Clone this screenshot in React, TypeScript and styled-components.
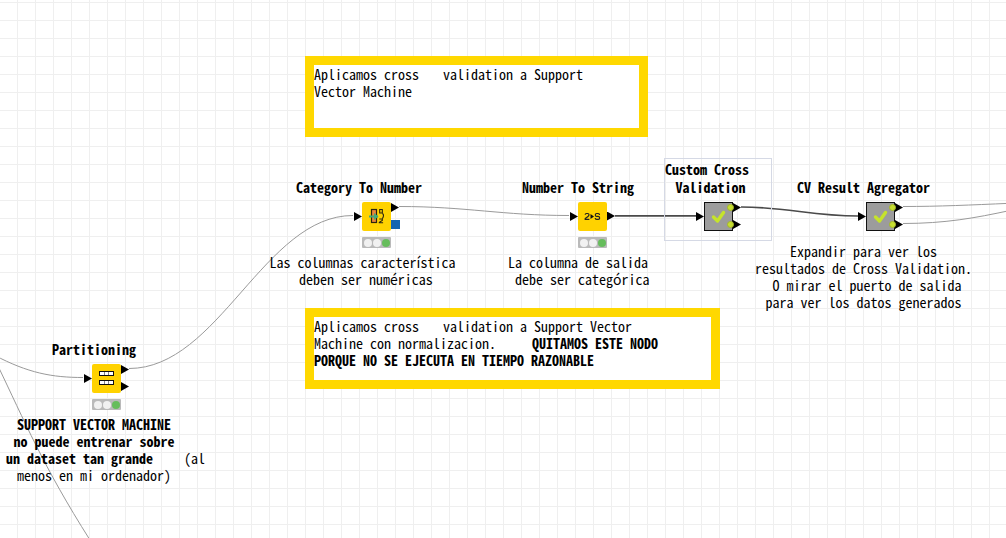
import React from "react";
import styled, { createGlobalStyle, css } from "styled-components";

const GlobalStyle = createGlobalStyle`
  *, *::before, *::after { box-sizing: border-box; }
  body {
    margin: 0;
    background: #fff;
    color: #000;
    font-family: "Noto Sans Mono CJK SC", "Liberation Mono", monospace;
    font-size: 14px;
    line-height: 17px;
  }
`;

const Canvas = styled.main`
  position: relative;
  min-height: 100vh;
  overflow: hidden;
  background-color: #fff;
  background-image: linear-gradient(to right, #efefef 1px, transparent 1px),
    linear-gradient(to bottom, #efefef 1px, transparent 1px);
  background-size: 18px 18px;
  background-position: 17px 2px;
`;

const Connections = styled.svg`
  position: absolute;
  inset: 0;
  width: 100%;
  height: 100%;
  overflow: visible;
  fill: none;
`;

/* Anything that the user drops on the free workflow canvas. */
const CanvasItem = styled.div<{ $x: number; $y: number; $width: number }>`
  position: absolute;
  left: ${(p) => p.$x}px;
  top: ${(p) => p.$y}px;
  width: ${(p) => p.$width}px;
`;

const Annotation = styled(CanvasItem)`
  min-height: 81px;
  border: 9px solid #ffd800;
  background: #fff;
  padding-top: 1px;
`;

const Paragraph = styled.p`
  margin: 0;
  white-space: nowrap;
`;

const Gap = styled.span<{ $width: number }>`
  display: inline-block;
  width: ${(p) => p.$width}px;
`;

const Selection = styled(CanvasItem)`
  height: 83px;
  border: 1px solid #d5d9e5;
`;

const Title = styled.h2`
  margin: 0 0 6px;
  font-size: 14px;
  font-weight: 700;
  line-height: 18px;
  text-align: center;
  white-space: pre;
`;

const Description = styled.p<{ $far?: boolean }>`
  margin: ${(p) => (p.$far ? 12 : 6)}px 0 0;
  text-align: center;
  white-space: pre;
`;

const Line = styled.span`
  display: block;
`;

const NodeFigure = styled.div<{ $lead: number }>`
  padding-left: ${(p) => p.$lead}px;
`;

const NodeRow = styled.div`
  display: flex;
  align-items: center;
  height: 29px;
`;

const NodeBody = styled.div<{ $component?: boolean }>`
  width: 29px;
  height: 29px;
  background: #ffd200;
  border-radius: 2px;
  ${(p) =>
    p.$component &&
    css`
      background: #9c9c9c;
      border: 1px solid #111;
      border-radius: 0;
    `}
  svg {
    display: block;
    width: 100%;
    height: 100%;
  }
`;

const Outputs = styled.div`
  display: flex;
  flex-direction: column;
  justify-content: center;
  gap: 8px;
  height: 29px;
  padding: 1px 0 2px;
`;

const Arrow = styled.div`
  width: 8px;
  height: 9px;
  background: #000;
  clip-path: polygon(0 0, 100% 50%, 0 100%);
`;

const OutputPort = styled.div<{ $dot?: boolean }>`
  position: relative;
  ${(p) =>
    p.$dot &&
    css`
      &::before {
        content: "";
        position: absolute;
        z-index: 1;
        left: -6px;
        top: 1px;
        width: 7px;
        height: 7px;
        border: 1px solid #a3b52a;
        border-radius: 50%;
        background: #c6de30;
      }
    `}
`;

const ModelPort = styled.div`
  width: 9px;
  height: 9px;
  background: #1465b0;
`;

const Status = styled.div`
  display: flex;
  align-items: center;
  justify-content: center;
  gap: 1px;
  width: 29px;
  height: 11px;
  margin: 6px 0 0 8px;
  border-radius: 1px;
  background: #bababa;
`;

const Lamp = styled.span<{ $on?: boolean }>`
  width: 8px;
  height: 8px;
  border-radius: 50%;
  background: ${(p) => (p.$on ? "#66bd5c" : "#f1f1f1")};
`;

const PartitionIcon = () => (
  <svg viewBox="0 0 29 29" aria-hidden="true">
    <path d="M7 7h15v5H7zM7 16h15v5H7z" fill="#111" />
    <path
      d="M8 8h4v3H8zM12.500 8h4v3h-4zM17 8h4v3h-4zM8 17h4v3H8zM12.500 17h4v3h-4zM17 17h4v3h-4z"
      fill="#fff"
    />
  </svg>
);

const CategoryIcon = () => (
  <svg viewBox="0 0 29 29" fill="none" aria-hidden="true">
    <rect x="9.5" y="7.5" width="5" height="13" fill="#e8873a" stroke="#2b2410" strokeWidth="1.2" />
    <path d="M7 14.500h9" stroke="#45a878" strokeWidth="2" />
    <path d="M12 11l4.500 3.500L12 18z" fill="#45a878" />
    <path
      d="M17.700 7.500h2.600v3.500h-2.600zM20.500 11.500q2 1.500 0 5M17.300 17h3v1.500l-3 1.700v.5h3.800"
      stroke="#2b2410"
      strokeWidth="1.100"
    />
  </svg>
);

const ToStringIcon = () => (
  <svg viewBox="0 0 29 29" fill="none" aria-hidden="true">
    <path
      d="M7.200 12.800q0-1.300 1.300-1.300h1.200q1.300 0 1.300 1.300 0 .9-1 1.600l-2.800 2.100v.8h4.200"
      stroke="#222"
      strokeWidth="1.200"
    />
    <path d="M12.500 12l3.500 2.500-3.500 2.500z" fill="#111" />
    <path
      d="M21.500 12.900q0-1.400-1.400-1.400h-1.400q-1.400 0-1.400 1.400t1.400 1.500h1.400q1.500 0 1.500 1.500t-1.500 1.400h-1.500q-1.400 0-1.400-1.400"
      stroke="#222"
      strokeWidth="1.200"
    />
  </svg>
);

const CheckIcon = () => (
  <svg viewBox="0 0 27 27" fill="none" aria-hidden="true">
    <path
      d="M8.500 14l4 4L18.500 9.500"
      stroke="#c6e32b"
      strokeWidth="3.400"
      strokeLinecap="round"
      strokeLinejoin="round"
    />
  </svg>
);

type Port = "data" | "dotted" | "model";

interface NodeProps {
  x: number;
  y: number;
  width: number;
  lead: number;
  title: string[];
  icon: React.ReactNode;
  outputs: Port[];
  component?: boolean;
  description?: React.ReactNode[];
}

function WorkflowNode(props: NodeProps) {
  const { x, y, width, lead, title, icon, outputs, component, description } = props;
  return (
    <CanvasItem as="section" $x={x} $y={y} $width={width}>
      <Title>
        {title.map((text) => (
          <Line key={text}>{text}</Line>
        ))}
      </Title>
      <NodeFigure $lead={lead}>
        <NodeRow>
          <Arrow />
          <NodeBody $component={component}>{icon}</NodeBody>
          <Outputs>
            {outputs.map((port, i) =>
              port === "model" ? (
                <ModelPort key={i} />
              ) : (
                <OutputPort key={i} $dot={port === "dotted"}>
                  <Arrow />
                </OutputPort>
              )
            )}
          </Outputs>
        </NodeRow>
        {!component && (
          <Status>
            <Lamp />
            <Lamp />
            <Lamp $on />
          </Status>
        )}
      </NodeFigure>
      {description && (
        <Description $far={component}>
          {description.map((text, i) => (
            <Line key={i}>{text}</Line>
          ))}
        </Description>
      )}
    </CanvasItem>
  );
}

const nodes: NodeProps[] = [
  {
    x: 6,
    y: 340,
    width: 176,
    lead: 78,
    title: ["Partitioning"],
    icon: <PartitionIcon />,
    outputs: ["data", "data"],
    description: [
      <b>SUPPORT VECTOR MACHINE</b>,
      <b>no puede entrenar sobre</b>,
      <>
        <b>un dataset tan grande</b>
        <Gap $width={31} />
        (al
      </>,
      "menos en mi ordenador)",
    ],
  },
  {
    x: 268,
    y: 178,
    width: 189,
    lead: 86,
    title: ["Category To Number "],
    icon: <CategoryIcon />,
    outputs: ["data", "model"],
    description: ["Las columnas característica", " deben ser numéricas"],
  },
  {
    x: 508,
    y: 178,
    width: 140,
    lead: 62,
    title: ["Number To String"],
    icon: <ToStringIcon />,
    outputs: ["data"],
    description: ["La columna de salida", " debe ser categórica"],
  },
  {
    x: 665,
    y: 160,
    width: 84,
    lead: 31,
    title: ["Custom Cross", " Validation"],
    icon: <CheckIcon />,
    outputs: ["dotted", "dotted"],
    component: true,
  },
  {
    x: 755,
    y: 178,
    width: 217,
    lead: 103,
    title: ["CV Result Agregator"],
    icon: <CheckIcon />,
    outputs: ["dotted", "dotted"],
    component: true,
    description: [
      "Expandir para ver los",
      "resultados de Cross Validation.",
      " O mirar el puerto de salida",
      "para ver los datos generados",
    ],
  },
];

export default function App() {
  return (
    <Canvas>
      <GlobalStyle />
      <Connections aria-hidden="true">
        <g stroke="#9a9a9a" strokeWidth="1">
          <path d="M-6 355C28 373 52 377.500 83 377.500" />
          <path d="M-2 366C24 420 43 466 90 540" />
          <path d="M129 368.500C219 368.500 264 215.500 353 215.500" />
          <path d="M399 206.500C467 206.500 502 215.500 569 215.500" />
          <path d="M903 206.500C940 206.500 970 205 1010 203.300" />
          <path d="M903 223.500C945 223.500 975 218 1010 210.500" />
        </g>
        <g stroke="#4a4a4a" strokeWidth="1.700">
          <path d="M615 215.800H697" />
          <path d="M741 207C788 207 811 216 858 216" />
        </g>
      </Connections>

      <Annotation $x={305} $y={56} $width={343}>
        <Paragraph>
          Aplicamos cross
          <Gap $width={24} />
          validation a Support
          <br />
          Vector Machine
        </Paragraph>
      </Annotation>

      <Annotation $x={305} $y={308} $width={415}>
        <Paragraph>
          Aplicamos cross
          <Gap $width={24} />
          validation a Support Vector
          <br />
          Machine con normalizacion.
          <Gap $width={36} />
          <b>
            QUITAMOS ESTE NODO
            <br />
            PORQUE NO SE EJECUTA EN TIEMPO RAZONABLE
          </b>
        </Paragraph>
      </Annotation>

      <Selection $x={664} $y={158} $width={108} />

      {nodes.map((node) => (
        <WorkflowNode key={node.title[0]} {...node} />
      ))}
    </Canvas>
  );
}
